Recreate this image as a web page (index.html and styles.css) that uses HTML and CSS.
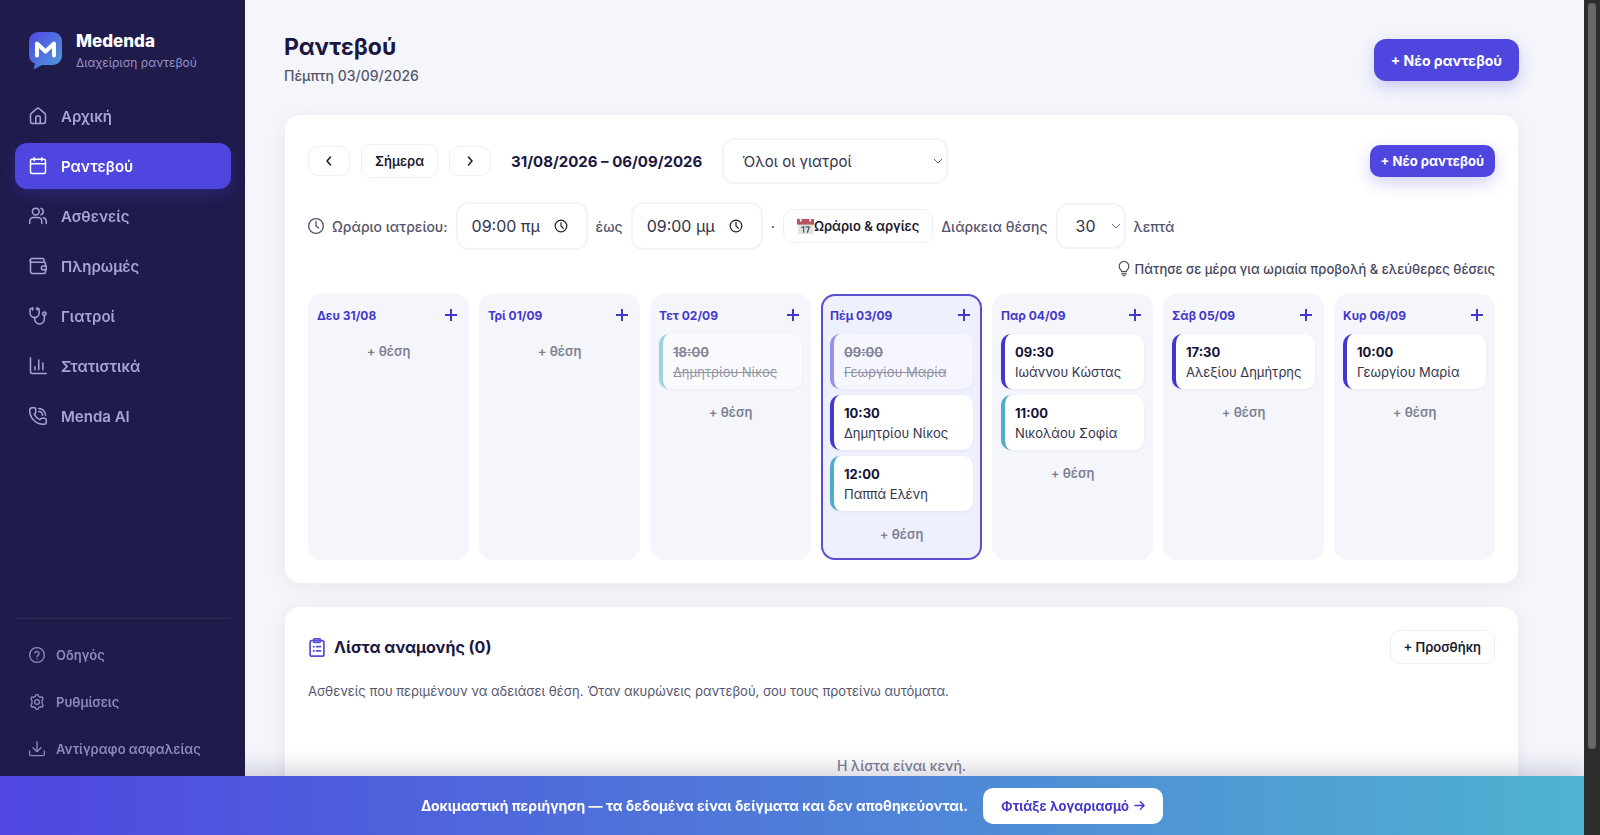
FILE: index.html
```html
<!DOCTYPE html>
<html lang="el">
<head>
<meta charset="UTF-8">
<meta name="viewport" content="width=device-width, initial-scale=1.0">
<title>Medenda - Ραντεβού</title>
<link rel="stylesheet" href="styles.css">
</head>
<body>
<aside class="sidebar">
    <div class="brand">
        <svg class="logo" viewBox="0 0 34 38">
            <defs><linearGradient id="lg" x1="0" y1="0" x2="1" y2="1"><stop offset="0" stop-color="#4f46e5"/><stop offset="1" stop-color="#4f9fd6"/></linearGradient></defs>
            <path d="M9 0h15a9 9 0 0 1 9 9v15a9 9 0 0 1-9 9H13l-8.500 4.500 1.500-6A9 9 0 0 1 0 24V9a9 9 0 0 1 9-9z" fill="url(#lg)"/>
            <path d="M8 23.500V11.500l8.500 8 8.500-8v12" fill="none" stroke="#fff" stroke-width="4" stroke-linecap="round" stroke-linejoin="round"/>
        </svg>
        <div>
            <div class="brand-name">Medenda</div>
            <div class="brand-sub">Διαχείριση ραντεβού</div>
        </div>
    </div>
    <nav class="nav">
        <a href="#"><svg viewBox="0 0 24 24"><path d="M15 21v-7a2 2 0 0 0-2-2h-2a2 2 0 0 0-2 2v7"/><path d="M2 10.500a2.500 2.500 0 0 1 1-2l7.200-6.200a2.700 2.700 0 0 1 3.600 0L21 8.500a2.500 2.500 0 0 1 1 2V19a3 3 0 0 1-3 3H5a3 3 0 0 1-3-3z"/></svg>Αρχική</a>
        <a href="#" class="active"><svg viewBox="0 0 24 24"><rect x="2" y="3" width="20" height="19" rx="2"/><path d="M7 1v4M17 1v4M2 9h20"/></svg>Ραντεβού</a>
        <a href="#"><svg viewBox="0 0 24 24"><path d="M17 22v-3a5 5 0 0 0-5-5H6a5 5 0 0 0-5 5v3"/><circle cx="9" cy="6" r="4.500"/><path d="M23 22v-3a5 5 0 0 0-4-4.800M16 1.800a4.500 4.500 0 0 1 0 8.500"/></svg>Ασθενείς</a>
        <a href="#"><svg viewBox="0 0 24 24"><path d="M20 7V4a2 2 0 0 0-2-2H4a2 2 0 0 0 0 5h16a2 2 0 0 1 2 2v3"/><path d="M2 4v15a3 3 0 0 0 3 3h15a2 2 0 0 0 2-2v-3"/><path d="M23 12h-4a2.500 2.500 0 0 0 0 5h4z"/></svg>Πληρωμές</a>
        <a href="#"><svg viewBox="0 0 24 24"><path d="M10 2h2.500a1 1 0 0 1 1 1v5a6 6 0 0 1-12 0V3a1 1 0 0 1 1-1H5M11 1v3M5 1v3"/><path d="M7.500 14v2a6.500 6.500 0 0 0 13 0v-5"/><circle cx="20.500" cy="9" r="2.200"/></svg>Γιατροί</a>
        <a href="#"><svg viewBox="0 0 24 24"><path d="M2 1v19a2 2 0 0 0 2 2h19M8 13v4M13 4v13M18.500 8v9"/></svg>Στατιστικά</a>
        <a href="#"><svg viewBox="0 0 24 24"><path d="M13 2a9 9 0 0 1 9 9M13 6a5 5 0 0 1 5 5"/><path d="M13.800 16.600a1 1 0 0 0 1.200-.3l.4-.5A2 2 0 0 1 17 15h4a2 2 0 0 1 2 2v3a3 3 0 0 1-3 3A18.500 18.500 0 0 1 1 4a3 3 0 0 1 3-3h3a2 2 0 0 1 2 2v4a2 2 0 0 1-.8 1.600l-.5.4a1 1 0 0 0-.3 1.200 14 14 0 0 0 6.400 6.400z"/></svg>Menda AI</a>
    </nav>
    <div class="nav-bottom">
        <a href="#"><svg viewBox="0 0 24 24"><circle cx="12" cy="12" r="11"/><path d="M8.800 9a3.300 3.300 0 0 1 6.400 1c0 2.200-3.200 2.800-3.200 4.500M12 18h.01"/></svg>Οδηγός</a>
        <a href="#"><svg viewBox="0 0 24 24"><path d="M9.500 3.500L10.500 1h3l1 2.500 2.500 1.400 2.700-.5 1.600 2.700L19.600 9.500v5l1.700 2.400-1.600 2.700-2.700-.5-2.500 1.400-1 2.500h-3l-1-2.500L7 19.100l-2.700.5-1.600-2.700 1.700-2.400v-5L2.700 7.100l1.600-2.700 2.700.5z"/><circle cx="12" cy="12" r="3.500"/></svg>Ρυθμίσεις</a>
        <a href="#"><svg viewBox="0 0 24 24"><path d="M12 1v15M6 10l6 6 6-6M1 15v5a2 2 0 0 0 2 2h18a2 2 0 0 0 2-2v-5"/></svg>Αντίγραφο ασφαλείας</a>
    </div>
</aside>

<main class="main">
    <header class="page-head">
        <div>
            <h1>Ραντεβού</h1>
            <p class="date">Πέμπτη 03/09/2026</p>
        </div>
        <button class="btn-primary">+ Νέο ραντεβού</button>
    </header>

    <section class="card">
        <div class="toolbar">
            <button class="btn arrow" aria-label="Προηγούμενη"><svg viewBox="0 0 12 12"><path d="M7.500 2L4 6l3.500 4"/></svg></button>
            <button class="btn">Σήμερα</button>
            <button class="btn arrow" aria-label="Επόμενη"><svg viewBox="0 0 12 12"><path d="M4.500 2L8 6l-3.500 4"/></svg></button>
            <strong class="range">31/08/2026 – 06/09/2026</strong>
            <select class="field doctors" aria-label="Γιατρός"><option>Όλοι οι γιατροί</option></select>
            <button class="btn-primary small">+ Νέο ραντεβού</button>
        </div>
        <div class="hours">
            <svg class="ic" viewBox="0 0 24 24"><circle cx="12" cy="12" r="11"/><path d="M12 5v7l4 3"/></svg>
            <label for="from">Ωράριο ιατρείου:</label>
            <span class="time">
                <input class="field" id="from" type="text" value="09:00 πμ">
                <svg viewBox="0 0 24 24"><circle cx="12" cy="12" r="10"/><path d="M12 6v6l4 4"/></svg>
            </span>
            <label for="to">έως</label>
            <span class="time">
                <input class="field" id="to" type="text" value="09:00 μμ">
                <svg viewBox="0 0 24 24"><circle cx="12" cy="12" r="10"/><path d="M12 6v6l4 4"/></svg>
            </span>
            <span class="dot">·</span>
            <button class="btn cal"><svg viewBox="0 0 18 18"><rect x="1" y="2" width="16" height="15" fill="#dfe3e1"/><path d="M0 1h18v6H0z" fill="#b9545c"/><path d="M4 0v3M14 0v3" stroke="#eee" stroke-width="2"/><path d="M5 10l2-1v6M9.500 9.500H13L11 15" fill="none" stroke="#4b5563" stroke-width="1.300"/></svg>Ωράριο &amp; αργίες</button>
            <label for="slot">Διάρκεια θέσης</label>
            <select class="field slot" id="slot"><option>30</option></select>
            <span>λεπτά</span>
        </div>
        <p class="hint"><svg viewBox="0 0 16 20"><path d="M5 13.500c0-2-3.500-3-3.500-7a6.500 6.500 0 0 1 13 0c0 4-3.500 5-3.500 7zM5 16.500h6M6.500 19h3"/></svg>Πάτησε σε μέρα για ωριαία προβολή &amp; ελεύθερες θέσεις</p>

        <div class="week">
            <div class="day">
                <div class="day-head">Δευ 31/08<button class="add" aria-label="Προσθήκη"></button></div>
                <button class="free">+ θέση</button>
            </div>
            <div class="day">
                <div class="day-head">Τρί 01/09<button class="add" aria-label="Προσθήκη"></button></div>
                <button class="free">+ θέση</button>
            </div>
            <div class="day">
                <div class="day-head">Τετ 02/09<button class="add" aria-label="Προσθήκη"></button></div>
                <div class="appt teal done"><b>18:00</b><span>Δημητρίου Νίκος</span></div>
                <button class="free">+ θέση</button>
            </div>
            <div class="day today">
                <div class="day-head">Πέμ 03/09<button class="add" aria-label="Προσθήκη"></button></div>
                <div class="appt done"><b>09:00</b><span>Γεωργίου Μαρία</span></div>
                <div class="appt"><b>10:30</b><span>Δημητρίου Νίκος</span></div>
                <div class="appt teal"><b>12:00</b><span>Παππά Ελένη</span></div>
                <button class="free">+ θέση</button>
            </div>
            <div class="day">
                <div class="day-head">Παρ 04/09<button class="add" aria-label="Προσθήκη"></button></div>
                <div class="appt"><b>09:30</b><span>Ιωάννου Κώστας</span></div>
                <div class="appt teal"><b>11:00</b><span>Νικολάου Σοφία</span></div>
                <button class="free">+ θέση</button>
            </div>
            <div class="day">
                <div class="day-head">Σάβ 05/09<button class="add" aria-label="Προσθήκη"></button></div>
                <div class="appt"><b>17:30</b><span>Αλεξίου Δημήτρης</span></div>
                <button class="free">+ θέση</button>
            </div>
            <div class="day">
                <div class="day-head">Κυρ 06/09<button class="add" aria-label="Προσθήκη"></button></div>
                <div class="appt"><b>10:00</b><span>Γεωργίου Μαρία</span></div>
                <button class="free">+ θέση</button>
            </div>
        </div>
    </section>

    <section class="card">
        <div class="list-head">
            <h2><svg viewBox="0 0 20 22"><rect x="2" y="3" width="16" height="18" rx="2"/><rect x="6" y="1" width="8" height="4" rx="1"/><path d="M6 10h.5M9.500 10H14M6 15h.5M9.500 15H14"/></svg>Λίστα αναμονής (0)</h2>
            <button class="btn">+ Προσθήκη</button>
        </div>
        <p class="info">Ασθενείς που περιμένουν να αδειάσει θέση. Όταν ακυρώνεις ραντεβού, σου τους προτείνω αυτόματα.</p>
        <p class="empty">Η λίστα είναι κενή.</p>
    </section>
</main>

<div class="demo-bar">
    <span>Δοκιμαστική περιήγηση — τα δεδομένα είναι δείγματα και δεν αποθηκεύονται.</span>
    <button>Φτιάξε λογαριασμό <svg viewBox="0 0 12 12"><path d="M1 6h10M7 2l4 4-4 4"/></svg></button>
</div>
<div class="scrollbar"><div class="thumb"></div></div>
</body>
</html>
```
FILE: styles.css
```css
* { margin:0; padding:0; box-sizing:border-box; }
html { scrollbar-width: none; }
body {
    font-family: Inter, 'Open Sans', sans-serif;
    font-size: 14px;
    background: #f4f6fb;
    color: #1a1740;
    padding: 0 16px 0 245px;
    min-height: 100vh;
}
button, input, select { font-family: inherit; }
button { cursor: pointer; }
a { text-decoration: none; }
svg { fill: none; stroke: currentColor; stroke-width: 2; stroke-linecap: round; stroke-linejoin: round; flex: none; }

/* sidebar */
.sidebar {
    position: fixed;
    top: 0; left: 0; bottom: 0;
    width: 245px;
    background: #1f1b4b;
    padding: 29px 14px 63px 15px;
    display: flex;
    flex-direction: column;
}
.brand { display: flex; align-items: center; gap: 13px; padding: 0 14px; margin-bottom: 20px; }
.logo { width: 34px; height: 38px; stroke: none; }
.brand-name { font-size: 17px; line-height: 24px; font-weight: 800; color: #fff; }
.brand-sub { font-size: 12px; line-height: 20px; color: #9792c8; white-space: nowrap; }
.nav { display: flex; flex-direction: column; gap: 4px; }
.nav a {
    display: flex;
    align-items: center;
    gap: 14px;
    height: 46px;
    padding: 0 14px;
    border-radius: 12px;
    color: #a9a4d8;
    font-size: 15px;
    font-weight: 600;
}
.nav svg { width: 18px; height: 18px; }
.nav a.active { background: #4f46e0; color: #fff; box-shadow: 0 6px 16px rgba(79,70,229,0.25); }
.nav-bottom { margin-top: auto; border-top: 1px solid #312f52; padding-top: 12px; }
.nav-bottom a {
    display: flex;
    align-items: center;
    gap: 11px;
    height: 47px;
    padding: 0 14px;
    color: #8f8ac0;
    font-size: 13px;
    font-weight: 600;
}
.nav-bottom svg { width: 16px; height: 16px; }

/* main */
.main { padding: 31px 65px 80px 39px; }
.page-head { display: flex; justify-content: space-between; align-items: center; margin-bottom: 25px; }
h1 { font-size: 23px; line-height: 32px; font-weight: 700; }
.date { font-size: 14px; line-height: 26px; color: #55556b; font-weight: 500; }
.btn-primary {
    height: 42px;
    padding: 0 17px;
    border: none;
    border-radius: 12px;
    background: #4f46e0;
    color: #fff;
    font-size: 14px;
    font-weight: 700;
    box-shadow: 0 6px 16px rgba(79,70,229,0.25);
}
.btn-primary.small { height: 32px; padding: 0 11px; border-radius: 10px; font-size: 13px; margin-left: auto; }
.card {
    background: #fff;
    border: 1px solid #eff1f7;
    border-radius: 16px;
    padding: 23px;
    margin-bottom: 22px;
    box-shadow: 0 4px 20px rgba(31,27,75,0.06);
}
.btn {
    display: inline-flex;
    align-items: center;
    justify-content: center;
    height: 34px;
    padding: 0 13px;
    border: 1px solid #eff0f5;
    border-radius: 10px;
    background: #fff;
    color: #1a1a2e;
    font-size: 13px;
    font-weight: 600;
}
.btn.arrow { width: 42px; height: 30px; padding: 0; }
.btn.arrow svg { width: 12px; height: 12px; stroke-width: 1.500; }
.field {
    height: 46px;
    border: 2px solid #f3f4f8;
    border-radius: 12px;
    background: #fff;
    color: #33334a;
    font-size: 16px;
    padding: 0 14px;
}
.toolbar { display: flex; align-items: center; gap: 11px; margin-bottom: 18px; }
.range { font-size: 15px; margin: 0 9px; }
select.field {
    appearance: none;
    padding-left: 18px;
    background: #fff url("data:image/svg+xml,%3Csvg xmlns='http://www.w3.org/2000/svg' viewBox='0 0 10 6'%3E%3Cpath d='M1 1l4 4 4-4' fill='none' stroke='%23666677'/%3E%3C/svg%3E") no-repeat right 3px center / 10px 6px;
}
select.doctors { width: 226px; font-size: 15px; }
.hours { display: flex; align-items: center; gap: 8px; color: #55556b; font-weight: 500; white-space: nowrap; }
.ic { width: 16px; height: 16px; stroke-width: 2; }
.time { position: relative; }
.time .field { width: 132px; height: 48px; display: block; }
.time svg { position: absolute; right: 20px; top: 17px; width: 14px; height: 14px; color: #1a1a2e; }
.cal svg { width: 17px; height: 17px; stroke: none; }
.slot { width: 70px; }
.hint { display: flex; justify-content: flex-end; align-items: center; gap: 5px; line-height: 20px; margin: 9px 0 15px; color: #45455c; font-size: 13px; font-weight: 500; }
.hint svg { width: 12px; height: 16px; stroke-width: 1.500; }

/* week */
.week { display: grid; grid-template-columns: repeat(7, 1fr); gap: 10px; }
.day { background: #f4f6fb; border-radius: 14px; padding: 9px; min-height: 265px; }
.today { background: #eef0fe; box-shadow: inset 0 0 0 2px #5a4fd0; }
.day-head { display: flex; justify-content: space-between; align-items: center; height: 24px; margin-bottom: 7px; color: #4338ca; font-size: 12px; font-weight: 700; }
.add {
    width: 22px; height: 22px;
    margin-right: -2px;
    border: none;
    background: linear-gradient(#4338ca,#4338ca) center / 12px 2px no-repeat, linear-gradient(#4338ca,#4338ca) center / 2px 12px no-repeat;
}
.appt {
    display: flex;
    flex-direction: column;
    height: 55px;
    padding: 8px 10px;
    margin-bottom: 6px;
    background: #fff;
    border-left: 4px solid #4338ca;
    border-radius: 10px;
    box-shadow: 0 1px 3px rgba(31,27,75,0.06);
    font-size: 13px;
    line-height: 20px;
    color: #33334a;
    white-space: nowrap;
}
.appt b { color: #111133; }
.appt.teal { border-left-color: #4fadc6; }
.appt.done { opacity: 0.5; text-decoration: line-through; }
.free { display: block; width: 100%; height: 34px; border: none; background: none; color: #7d7f92; font-size: 13px; font-weight: 600; }

/* waiting list */
.list-head { display: flex; justify-content: space-between; align-items: center; }
h2 { display: flex; align-items: center; gap: 8px; font-size: 16px; font-weight: 700; }
h2 svg { width: 18px; height: 19px; color: #5a4fd6; }
.info { margin-top: 17px; font-size: 13px; line-height: 20px; color: #55556b; }
.empty { margin: 54px 0 40px; text-align: center; font-size: 14px; line-height: 22px; color: #7d7f92; font-weight: 500; }

.demo-bar {
    position: fixed;
    left: 0; right: 16px; bottom: 0;
    height: 59px;
    display: flex;
    align-items: center;
    justify-content: center;
    gap: 15px;
    background: linear-gradient(90deg, #4f46e0, #4fb3d1);
    color: #fff;
    font-size: 14px;
    font-weight: 700;
    box-shadow: 0 -6px 24px rgba(31,27,75,0.2);
}
.demo-bar button {
    display: flex;
    align-items: center;
    gap: 5px;
    height: 36px;
    padding: 0 18px;
    border: none;
    border-radius: 10px;
    background: #fff;
    color: #4338ca;
    font-size: 13px;
    font-weight: 700;
}
.demo-bar svg { width: 11px; height: 11px; stroke-width: 1.500; }
.scrollbar { position: fixed; top: 0; right: 0; bottom: 0; width: 16px; background: #2c2c2c; padding: 3px 4px; }
.thumb { height: 90%; background: #686868; border-radius: 5px; }
```
